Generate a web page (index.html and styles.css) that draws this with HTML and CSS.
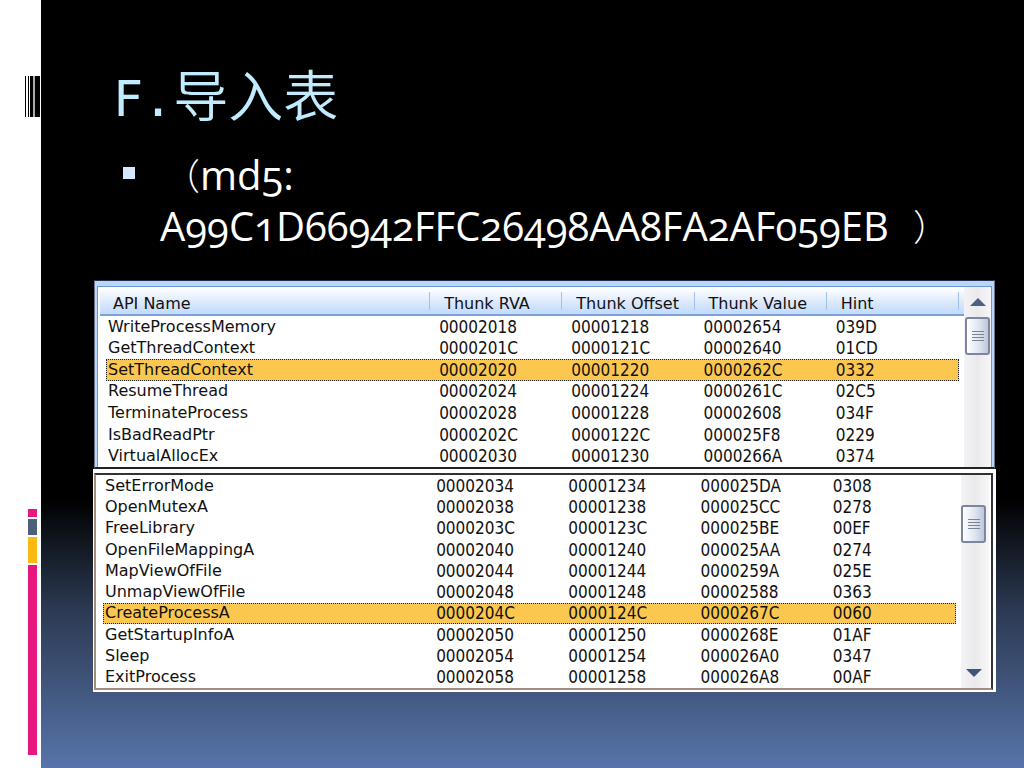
FILE: index.html
```
<!DOCTYPE html>
<html lang="zh-CN">
<head>
  <meta charset="UTF-8" />
  <meta name="viewport" content="width=device-width, initial-scale=1.0"/>
  <title>F.导入表</title>
  <link rel="stylesheet" href="styles.css">
</head>
<body>
  <div class="slide">
    <div class="strip">
      <svg class="barcode" width="15" height="41" viewBox="0 0 15 41" aria-hidden="true">
        <path d="M0 0h1v41H0zM3 0h1v41H3zM5 0h3v41H5zM10 0h5v41h-5z" fill="#000"/>
        <path d="M8 0h2v41H8z" fill="#aaa"/>
      </svg>
      <div class="bars">
        <span class="bar bar-small"></span>
        <span class="bar bar-slate"></span>
        <span class="bar bar-amber"></span>
        <span class="bar bar-long"></span>
      </div>
    </div>

    <main class="content">
      <h1>F.<span class="cjk">导入表</span></h1>
      <ul class="points">
        <li><span class="paren">（</span>md5:<br>A99C1D66942FFC26498AA8FA2AF059EB<span class="paren paren-close">）</span></li>
      </ul>

      <div class="figure">
        <!-- Upper half of the import list -->
        <div class="panel panel-top">
          <div class="list">
            <table>
              <thead>
                <tr><th class="name">API Name</th><th>Thunk RVA</th><th>Thunk Offset</th><th>Thunk Value</th><th>Hint</th></tr>
              </thead>
              <tbody>
                <tr><td>WriteProcessMemory</td><td>00002018</td><td>00001218</td><td>00002654</td><td>039D</td></tr>
                <tr><td>GetThreadContext</td><td>0000201C</td><td>0000121C</td><td>00002640</td><td>01CD</td></tr>
                <tr class="selected"><td>SetThreadContext</td><td>00002020</td><td>00001220</td><td>0000262C</td><td>0332</td></tr>
                <tr><td>ResumeThread</td><td>00002024</td><td>00001224</td><td>0000261C</td><td>02C5</td></tr>
                <tr><td>TerminateProcess</td><td>00002028</td><td>00001228</td><td>00002608</td><td>034F</td></tr>
                <tr><td>IsBadReadPtr</td><td>0000202C</td><td>0000122C</td><td>000025F8</td><td>0229</td></tr>
                <tr><td>VirtualAllocEx</td><td>00002030</td><td>00001230</td><td>0000266A</td><td>0374</td></tr>
              </tbody>
            </table>
          </div>
          <div class="scrollbar">
            <button class="arrow" aria-label="Scroll up">
              <svg width="16" height="8" viewBox="0 0 16 8"><path d="M0 8L8 0l8 8z" fill="#4d5f85"/></svg>
            </button>
            <div class="thumb">
              <svg width="12" height="11" viewBox="0 0 12 11"><path d="M0 .5h12M0 3.5h12M0 6.5h12M0 9.5h12" stroke="#7b8494"/></svg>
            </div>
          </div>
        </div>

        <!-- Lower half -->
        <div class="sheet">
          <div class="panel panel-bottom">
            <div class="list">
              <table>
                <tbody>
                  <tr><td class="name">SetErrorMode</td><td>00002034</td><td>00001234</td><td>000025DA</td><td>0308</td></tr>
                  <tr><td>OpenMutexA</td><td>00002038</td><td>00001238</td><td>000025CC</td><td>0278</td></tr>
                  <tr><td>FreeLibrary</td><td>0000203C</td><td>0000123C</td><td>000025BE</td><td>00EF</td></tr>
                  <tr><td>OpenFileMappingA</td><td>00002040</td><td>00001240</td><td>000025AA</td><td>0274</td></tr>
                  <tr><td>MapViewOfFile</td><td>00002044</td><td>00001244</td><td>0000259A</td><td>025E</td></tr>
                  <tr><td>UnmapViewOfFile</td><td>00002048</td><td>00001248</td><td>00002588</td><td>0363</td></tr>
                  <tr class="selected"><td>CreateProcessA</td><td>0000204C</td><td>0000124C</td><td>0000267C</td><td>0060</td></tr>
                  <tr><td>GetStartupInfoA</td><td>00002050</td><td>00001250</td><td>0000268E</td><td>01AF</td></tr>
                  <tr><td>Sleep</td><td>00002054</td><td>00001254</td><td>000026A0</td><td>0347</td></tr>
                  <tr><td>ExitProcess</td><td>00002058</td><td>00001258</td><td>000026A8</td><td>00AF</td></tr>
                </tbody>
              </table>
            </div>
            <div class="scrollbar">
              <div class="thumb">
                <svg width="12" height="11" viewBox="0 0 12 11"><path d="M0 .5h12M0 3.5h12M0 6.5h12M0 9.5h12" stroke="#7b8494"/></svg>
              </div>
              <button class="arrow arrow-down" aria-label="Scroll down">
                <svg width="16" height="8" viewBox="0 0 16 8"><path d="M0 0h16L8 8z" fill="#3f5380"/></svg>
              </button>
            </div>
          </div>
        </div>
      </div>
    </main>
  </div>
</body>
</html>
```
FILE: styles.css
```
* {
  box-sizing: border-box;
}

body {
  margin: 0;
}

.slide {
  display: flex;
  min-height: 100vh;
  background: linear-gradient(#000 65%, #2b3850 79%, #5774aa 100%);
}

.strip {
  width: 41px;
  background: #fff;
  display: flex;
  flex-direction: column;
  justify-content: space-between;
  align-items: flex-end;
  padding: 76px 1px 13px 0;
}

.barcode {
  display: block;
}

.bars {
  display: flex;
  flex-direction: column;
  gap: 2px;
  padding-right: 3px;
}

.bar {
  width: 9px;
  background: #e6187d;
}

.bar-small {
  height: 8px;
}

.bar-slate {
  height: 16px;
  background: #4d6078;
}

.bar-amber {
  height: 26px;
  background: #fdb913;
}

.bar-long {
  height: 190px;
}

.content {
  flex: 1;
  padding: 59px 28px 0 52px;
}

h1 {
  margin: 0;
  padding-left: 20px;
  font-family: "DejaVu Sans Mono", monospace;
  font-size: 50px;
  line-height: 66px;
  font-weight: normal;
  color: #c1ecff;
}

.cjk {
  font-family: "Noto Sans CJK SC", sans-serif;
  font-size: 55px;
  font-weight: 350;
}

.points {
  margin: 0;
  padding: 17px 0 0 67px;
  list-style: none;
  font-family: "Open Sans", "Noto Sans CJK SC", sans-serif;
  font-size: 40px;
  line-height: 51px;
  font-variant-numeric: oldstyle-nums;
  color: #fff;
}

.points li {
  position: relative;
}

.points li::before {
  content: "";
  position: absolute;
  left: -37px;
  top: 18px;
  width: 12px;
  height: 12px;
  background: #d5e8ff;
}

.paren {
  padding-left: 4px;
  font-family: "Noto Sans CJK SC", sans-serif;
  font-size: 36px;
  line-height: 1;
  font-weight: 300;
}

.paren-close {
  padding-left: 24px;
}

.figure {
  margin-top: 29px;
  font-family: "DejaVu Sans", sans-serif;
  font-size: 16px;
  color: #111;
}

.panel {
  display: flex;
}

.panel-top {
  margin: 0 1px;
  padding: 5px 2px 0;
  border: 1px solid #6b7488;
  border-bottom: 2px solid #222;
  border-top-color: #223050;
  background: #bad7fb;
}

.panel-top .list {
  flex: 1;
  border: 1px solid #6f97d6;
  border-width: 1px 0 0 1px;
  padding-left: 8px;
  background: linear-gradient(#fff, #dce9fc 50%, #c0daff 26px, #7ba2d9 26px) no-repeat 2px 1px / 100% 28px, #fff;
}

.panel-top .scrollbar {
  border-top: 1px solid #6f97d6;
  border-right: 1px solid #6f97d6;
}

.sheet {
  padding: 4px 3px 2px 1px;
  background: #fff;
}

.panel-bottom {
  padding-right: 2px;
  border: 2px solid #a08f7f;
  border-top-color: #333;
  border-right-color: #30333c;
}

.panel-bottom .list {
  flex: 1;
  padding-left: 7px;
}

table {
  width: 100%;
  border-collapse: separate;
  border-spacing: 0;
  table-layout: fixed;
}

.panel-top table {
  height: 180px;
}

.panel-bottom table {
  height: 213px;
}

.list {
  padding-right: 5px;
}

th,
td {
  width: 15.5%;
  padding: 0 0 0 9px;
  line-height: 18px;
  text-align: left;
  font-weight: normal;
  white-space: nowrap;
}

td + td {
  font-family: "DejaVu Sans Condensed", "DejaVu Sans", sans-serif;
  font-stretch: condensed;
  font-size: 17px;
}

.name {
  width: 38%;
}

td:first-child {
  padding-left: 2px;
}

th {
  height: 29px;
  padding: 4px 0 0 14px;
  background: linear-gradient(#9fc1ef, #9fc1ef) no-repeat right 5px / 1px 18px;
}

th.name {
  padding-left: 7px;
}

.selected {
  background: #fbc74f;
  outline: 1px dotted #222;
  outline-offset: -1px;
}

.scrollbar {
  width: 28px;
  display: flex;
  flex-direction: column;
  align-items: center;
  background: linear-gradient(90deg, #f3f3f5, #eaeaec 50%, #f7f7f8);
}

.panel-bottom .scrollbar {
  padding: 30px 3px 0 0;
}

.arrow {
  display: flex;
  justify-content: center;
  align-items: center;
  width: 100%;
  height: 30px;
  padding: 0;
  border: none;
  background: none;
}

.arrow-down {
  margin-top: auto;
}

.thumb {
  display: flex;
  justify-content: center;
  align-items: center;
  width: 25px;
  height: 38px;
  border: 2px solid #7c869e;
  border-radius: 3px;
  background: linear-gradient(90deg, #fff, #dde3ee 60%, #bcc8dc);
}
```
